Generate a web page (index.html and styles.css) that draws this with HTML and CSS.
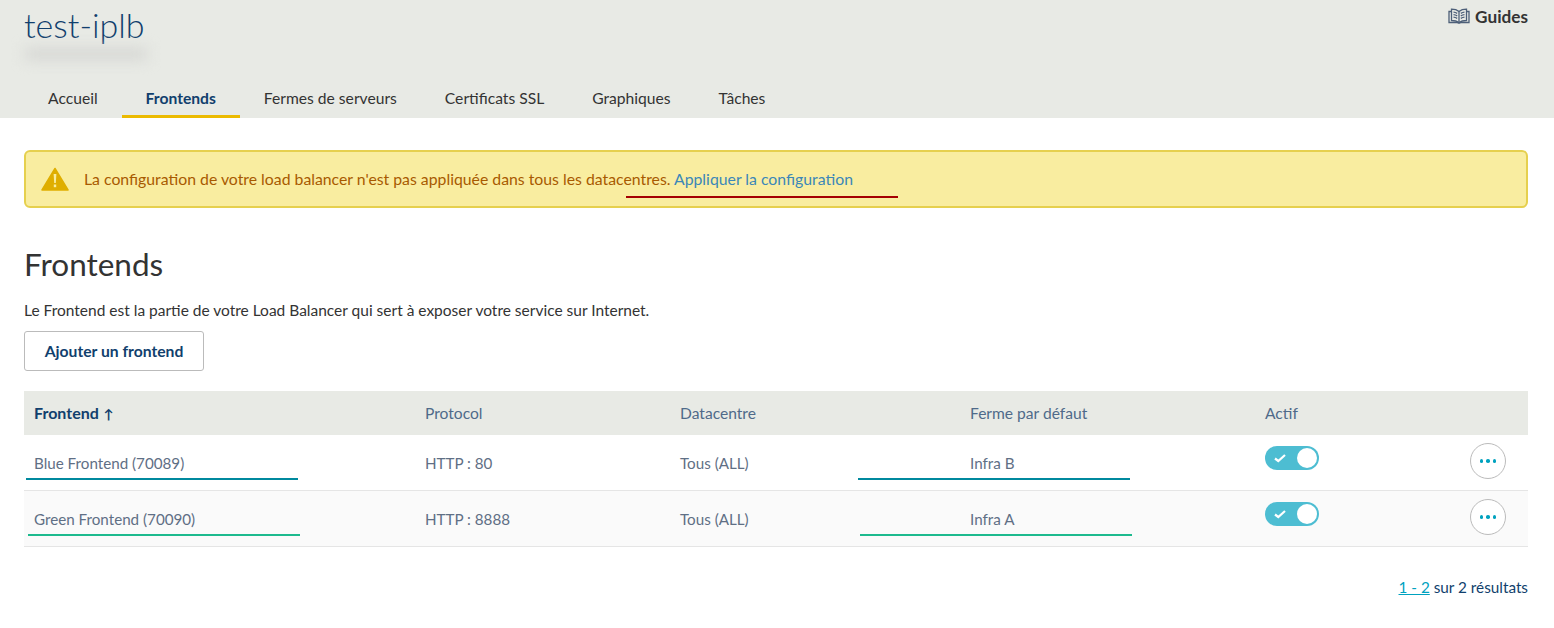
FILE: index.html
```html
<!DOCTYPE html>
<html lang="fr">
	<head>
		<meta charset="utf-8">
		<title>test-iplb</title>
		<link rel="stylesheet" href="styles.css">
	</head>
	<body>
		<div class="page-head">
			<div class="head-top">
				<div>
					<h1 class="page-title">test-iplb</h1>
					<div class="blur-sub"></div>
				</div>
				<a class="guides" href="#">
					<svg width="22" height="16" viewBox="0 0 22 16" fill="none" stroke="#4d5f78" stroke-width="1.300">
						<path d="M11 3.500C9 1.800 6.500 1.200 3.500 1.200V12.500C6.500 12.500 9 13 11 14.500C13 13 15.500 12.500 18.500 12.500V1.200C15.500 1.200 13 1.800 11 3.500Z" fill="#e8eae5"/>
						<path d="M3.500 3.500H1V14.500H9C9.700 14.500 10.400 14.800 11 15.200C11.600 14.800 12.300 14.500 13 14.500H21V3.500H18.500"/>
						<path d="M11 3.500V14.500M5.500 4.200C7 4.300 8 4.700 9.200 5.400M5.500 6.700C7 6.800 8 7.200 9.200 7.900M5.500 9.200C7 9.300 8 9.700 9.200 10.400M16.500 4.200C15 4.300 14 4.700 12.800 5.400M16.500 6.700C15 6.800 14 7.200 12.800 7.900M16.500 9.200C15 9.300 14 9.700 12.800 10.400"/>
					</svg>
					Guides
				</a>
			</div>
			<nav class="tabs">
				<a class="tab" href="#">Accueil</a>
				<a class="tab tab-active" href="#">Frontends</a>
				<a class="tab" href="#">Fermes de serveurs</a>
				<a class="tab" href="#">Certificats SSL</a>
				<a class="tab" href="#">Graphiques</a>
				<a class="tab" href="#">Tâches</a>
			</nav>
		</div>

		<div class="content">
			<div class="alert">
				<svg class="alert-icon" width="28" height="24" viewBox="0 0 28 24">
					<path d="M14 1.500L27 23H1Z" fill="#dfae00" stroke="#dfae00" stroke-width="1.500" stroke-linejoin="round"/>
					<path d="M12.600 7H15.400L14.800 16H13.200Z" fill="#f9eda0"/>
					<rect x="12.800" y="17.500" width="2.400" height="2.700" fill="#f9eda0"/>
				</svg>
				<span class="alert-text">La configuration de votre load balancer n'est pas appliquée dans tous les datacentres. <a class="alert-link" href="#">Appliquer la configuration</a></span>
				<i class="mark mark-red"></i>
			</div>

			<h2 class="section-title">Frontends</h2>
			<p class="section-desc">Le Frontend est la partie de votre Load Balancer qui sert à exposer votre service sur Internet.</p>
			<button class="btn-add" type="button">Ajouter un frontend</button>

			<div class="table-wrap">
				<table class="frontends">
					<thead>
						<tr>
							<th class="col-name sorted">Frontend <span class="arrow">↑</span></th>
							<th class="col-proto">Protocol</th>
							<th class="col-dc">Datacentre</th>
							<th class="col-farm">Ferme par défaut</th>
							<th class="col-on">Actif</th>
							<th></th>
						</tr>
					</thead>
					<tbody>
						<tr>
							<td>Blue Frontend (70089)</td>
							<td>HTTP : 80</td>
							<td>Tous (ALL)</td>
							<td>Infra B</td>
							<td>
								<span class="toggle">
									<svg width="12" height="10" viewBox="0 0 12 10" fill="none" stroke="#fff" stroke-width="2.200"><path d="M1 5.500L4.300 8L11 2"/></svg>
									<span class="knob"></span>
								</span>
							</td>
							<td><button class="btn-more" type="button" aria-label="Actions"><i></i><i></i><i></i></button></td>
						</tr>
						<tr class="alt">
							<td>Green Frontend (70090)</td>
							<td>HTTP : 8888</td>
							<td>Tous (ALL)</td>
							<td>Infra A</td>
							<td>
								<span class="toggle">
									<svg width="12" height="10" viewBox="0 0 12 10" fill="none" stroke="#fff" stroke-width="2.200"><path d="M1 5.500L4.300 8L11 2"/></svg>
									<span class="knob"></span>
								</span>
							</td>
							<td><button class="btn-more" type="button" aria-label="Actions"><i></i><i></i><i></i></button></td>
						</tr>
					</tbody>
				</table>
				<i class="mark mark-teal m1"></i>
				<i class="mark mark-teal m2"></i>
				<i class="mark mark-green m3"></i>
				<i class="mark mark-green m4"></i>
			</div>

			<div class="pager"><a href="#">1 - 2</a> sur 2 résultats</div>
		</div>
	</body>
</html>
```

FILE: styles.css
```css
body {
	margin: 0;
	background-color: #fff;
	font-family: "Lato", "Noto Sans", sans-serif;
	font-size: 15.5px;
	color: #333;
}

a {
	text-decoration: none;
}

.page-head {
	height: 118px;
	background-color: #e8eae5;
	display: flex;
	flex-direction: column;
	justify-content: space-between;
}

.head-top {
	display: flex;
	justify-content: space-between;
	padding: 0 26px 0 24px;
}

.page-title {
	margin: 6px 0 0;
	font-size: 34px;
	line-height: 38px;
	font-weight: 300;
	color: #113f6d;
}

.blur-sub {
	width: 122px;
	height: 12px;
	margin: 4px 0 0 1px;
	background-color: #d5d6d3;
	filter: blur(7px);
}

.guides {
	display: flex;
	align-items: center;
	gap: 5px;
	height: 16px;
	margin-top: 8px;
	font-size: 17.200px;
	font-weight: 700;
	color: #333;
}

.tabs {
	display: flex;
	padding-left: 24px;
}

.tab {
	padding: 0 24px;
	height: 35px;
	line-height: 37px;
	font-size: 15.650px;
	color: #333;
	border-bottom: 3px solid transparent;
}

.tab-active {
	font-weight: 700;
	color: #113f6d;
	border-bottom-color: #ebba00;
}

.content {
	padding: 32px 26px 0 24px;
}

.alert {
	position: relative;
	display: flex;
	align-items: center;
	gap: 15px;
	box-sizing: border-box;
	height: 58px;
	padding: 0 15px;
	background-color: #f9eda0;
	border: 2px solid #e6d04e;
	border-radius: 6px;
	font-size: 15.800px;
	color: #a85a00;
}

.alert-text {
	margin-top: -2px;
}

.alert-link {
	color: #3b87b8;
}

.mark {
	position: absolute;
	display: block;
	width: 272px;
	height: 2px;
}

.mark-red {
	left: 600px;
	top: 44px;
	background-color: #a50000;
}

.mark-teal {
	background-color: #00899e;
}

.mark-green {
	background-color: #1dba8e;
}

.m1 { left: 2px; top: 87px; }
.m2 { left: 834px; top: 87px; }
.m3 { left: 4px; top: 143px; }
.m4 { left: 836px; top: 143px; }

.section-title {
	margin: 36px 0 0;
	font-size: 31.500px;
	line-height: 40px;
	font-weight: 400;
	color: #333;
}

.section-desc {
	margin: 15px 0 0;
	line-height: 22px;
}

.btn-add {
	display: block;
	width: 180px;
	height: 40px;
	margin-top: 10px;
	padding: 0;
	background-color: #fff;
	border: 1px solid #bbb;
	border-radius: 3px;
	font-family: inherit;
	font-size: 15.700px;
	font-weight: 700;
	color: #113f6d;
}

.table-wrap {
	position: relative;
	margin-top: 20px;
}

.frontends {
	width: 1504px;
	table-layout: fixed;
	border-collapse: separate;
	border-spacing: 0;
}

.frontends th {
	box-sizing: border-box;
	height: 44px;
	padding: 0 0 1px 10px;
	background-color: #e8eae5;
	font-size: 15.600px;
	font-weight: 400;
	text-align: left;
	color: #4f6a8a;
}

.frontends th.sorted {
	font-size: 16px;
	font-weight: 700;
	color: #113f6d;
}

.arrow {
	font-size: 13px;
	margin-left: 1px;
}

.col-name { width: 391px; }
.col-proto { width: 255px; }
.col-dc { width: 290px; }
.col-farm { width: 295px; }
.col-on { width: 205px; }

.frontends td {
	box-sizing: border-box;
	height: 56px;
	padding: 0 0 0 10px;
	border-bottom: 1px solid #e5e5e5;
	font-size: 15.200px;
	color: #5f6f85;
}

.frontends .alt td {
	background-color: #fafafa;
}

.toggle {
	display: flex;
	align-items: center;
	justify-content: space-between;
	box-sizing: border-box;
	width: 54px;
	height: 24px;
	margin-top: -9px;
	padding: 0 2px 0 9px;
	background-color: #4dbdd2;
	border-radius: 12px;
}

.knob {
	width: 20px;
	height: 20px;
	background-color: #fff;
	border-radius: 50%;
}

.btn-more {
	display: flex;
	align-items: center;
	justify-content: center;
	gap: 3px;
	width: 36px;
	height: 36px;
	margin-top: -3px;
	padding: 0;
	background-color: #fff;
	border: 1px solid #bbb;
	border-radius: 50%;
}

.btn-more i {
	width: 3.500px;
	height: 3.500px;
	background-color: #00a2bf;
	border-radius: 50%;
}

.pager {
	margin-top: 29px;
	text-align: right;
	line-height: 22px;
	font-size: 15.300px;
	color: #113f6d;
}

.pager a {
	color: #00a2bf;
	text-decoration: underline;
}
```
